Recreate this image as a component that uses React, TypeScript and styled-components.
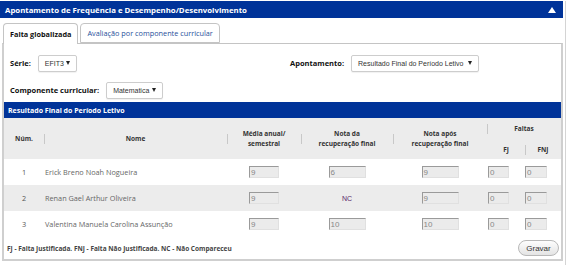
import React from "react";
import styled, { createGlobalStyle } from "styled-components";

const Global = createGlobalStyle`
  html, body { margin: 0; padding: 0; background: #fff; }
  body { font-family: "Open Sans", "DejaVu Sans", sans-serif; }
  * { box-sizing: border-box; }
`;

const Page = styled.div`
  width: 566px;
  height: 265px;
  border-right: 1px solid #d4d4d4;
`;

const Header = styled.div`
  width: 563px;
  height: 17px;
  margin-top: 1px;
  background: #003399;
  color: #fff;
  font-weight: 700;
  font-size: 7.8px;
  display: flex;
  align-items: center;
  justify-content: space-between;
  padding: 0 7px 0 5px;
`;

const Arrow = styled.span`
  width: 0;
  height: 0;
  border-left: 4px solid transparent;
  border-right: 4px solid transparent;
  border-bottom: 6px solid #fff;
`;

const Tabs = styled.div`
  display: flex;
  gap: 2px;
  padding-left: 3px;
  margin-top: 5px;
  position: relative;
  z-index: 1;
`;

const Tab = styled.div<{ $active?: boolean }>`
  height: ${(p) => (p.$active ? 21 : 20)}px;
  padding: 0 6px;
  display: flex;
  align-items: center;
  font-size: 7.3px;
  font-weight: ${(p) => (p.$active ? 700 : 400)};
  color: ${(p) => (p.$active ? "#111" : "#1f4f9a")};
  border: 1px solid #c4c4c4;
  border-bottom: ${(p) => (p.$active ? "none" : "1px solid #c4c4c4")};
  border-radius: 4px 4px 0 0;
  background: #fff;
  white-space: nowrap;
`;

const Box = styled.div`
  width: 561px;
  margin-left: 2px;
  margin-top: -1px;
  height: 218px;
  border: 2px solid #cfcfcf;
  border-top: 1px solid #c4c4c4;
  display: flex;
  flex-direction: column;
`;

const FormRow = styled.div<{ $mt: number }>`
  display: flex;
  align-items: center;
  height: 16px;
  padding-left: 6px;
  margin-top: ${(p) => p.$mt}px;
`;

const Field = styled.div<{ $w?: number }>`
  display: flex;
  align-items: center;
  gap: 7px;
  width: ${(p) => (p.$w ? `${p.$w}px` : "auto")};
`;

const Label = styled.span`
  font-size: 7.5px;
  font-weight: 700;
  color: #111;
  white-space: nowrap;
`;

const Select = styled.div<{ $w: number }>`
  width: ${(p) => p.$w}px;
  height: 17px;
  border: 1px solid #cdcdcd;
  border-radius: 2px;
  background: #fff;
  font-family: "Liberation Sans", Arial, sans-serif;
  font-size: 7px;
  color: #333;
  display: flex;
  align-items: center;
  justify-content: space-between;
  padding: 0 6px 0 6px;
  white-space: nowrap;
  box-shadow: 0 1px 1px rgba(0,0,0,0.06);
`;

const Caret = styled.span`
  width: 0;
  height: 0;
  flex: none;
  border-left: 2.5px solid transparent;
  border-right: 2.5px solid transparent;
  border-top: 4px solid #222;
`;

const SubHeader = styled.div`
  margin-top: 4px;
  height: 16px;
  background: #003399;
  color: #fff;
  font-weight: 700;
  font-size: 7px;
  display: flex;
  align-items: center;
  padding-left: 4px;
`;

const Table = styled.table`
  width: 100%;
  border-collapse: collapse;
  table-layout: fixed;
`;

const Th = styled.th<{ $sep?: boolean }>`
  font-size: 6.5px;
  font-weight: 700;
  color: #333;
  background: #ececec;
  text-align: center;
  vertical-align: middle;
  padding: 0;
  line-height: 10px;
  position: relative;
  &::before {
    content: "";
    display: ${(p) => (p.$sep ? "block" : "none")};
    position: absolute;
    left: 0;
    top: 50%;
    margin-top: -5px;
    width: 1px;
    height: 10px;
    background: #c8c8c8;
  }
`;

const HeadTop = styled.tr`
  height: 22px;
`;
const HeadBottom = styled.tr`
  height: 19px;
`;

const Row = styled.tr<{ $alt?: boolean }>`
  height: 26px;
  background: ${(p) => (p.$alt ? "#ececec" : "#fff")};
`;

const Td = styled.td<{ $align?: string; $pl?: number }>`
  font-size: 7.3px;
  color: #666;
  text-align: ${(p) => p.$align || "center"};
  padding: 0 0 0 ${(p) => p.$pl || 0}px;
  vertical-align: middle;
  white-space: nowrap;
`;

const NumTd = styled(Td)`
  color: #555;
`;

const Input = styled.div<{ $w: number }>`
  display: inline-flex;
  align-items: center;
  width: ${(p) => p.$w}px;
  height: 12px;
  background: #ebebeb;
  border-top: 1px solid #9a9a9a;
  border-left: 1px solid #9a9a9a;
  border-right: 1px solid #e0e0e0;
  border-bottom: 1px solid #e0e0e0;
  font-family: "Liberation Sans", Arial, sans-serif;
  font-size: 8px;
  color: #888;
  padding-left: 1px;
  vertical-align: middle;
`;

const NC = styled.span`
  font-family: "Liberation Sans", Arial, sans-serif;
  font-size: 7px;
  color: #5a2a6a;
`;

const Footer = styled.div`
  display: flex;
  align-items: center;
  justify-content: space-between;
  padding: 0 2px 0 3px;
  margin-top: 3px;
`;

const Legend = styled.span`
  font-size: 6.5px;
  font-weight: 700;
  color: #444;
`;

const Button = styled.button`
  width: 41px;
  height: 16px;
  border-radius: 8px;
  border: 1px solid #b8b8b8;
  background: linear-gradient(#fdfdfd, #e4e4e4);
  font-family: "Liberation Sans", Arial, sans-serif;
  font-size: 8px;
  color: #333;
  padding: 0;
`;

type Student = {
  n: number;
  name: string;
  media: string;
  rec: string | null;
  apos: string;
  fj: string;
  fnj: string;
};

const students: Student[] = [
  { n: 1, name: "Erick Breno Noah Nogueira", media: "9", rec: "6", apos: "9", fj: "0", fnj: "0" },
  { n: 2, name: "Renan Gael Arthur Oliveira", media: "9", rec: null, apos: "9", fj: "0", fnj: "0" },
  { n: 3, name: "Valentina Manuela Carolina Assunção", media: "9", rec: "10", apos: "10", fj: "0", fnj: "0" },
];

export default function App() {
  return (
    <Page>
      <Global />
      <Header>
        <span>Apontamento de Frequência e Desempenho/Desenvolvimento</span>
        <Arrow />
      </Header>
      <Tabs>
        <Tab $active>Falta globalizada</Tab>
        <Tab>Avaliação por componente curricular</Tab>
      </Tabs>
      <Box>
        <FormRow $mt={11}>
          <Field $w={280}>
            <Label>Série:</Label>
            <Select $w={39}>
              <span>EFIT3</span>
              <Caret />
            </Select>
          </Field>
          <Field>
            <Label>Apontamento:</Label>
            <Select $w={128}>
              <span>Resultado Final do Período Letivo</span>
              <Caret />
            </Select>
          </Field>
        </FormRow>
        <FormRow $mt={11}>
          <Field>
            <Label>Componente curricular:</Label>
            <Select $w={57}>
              <span>Matematica</span>
              <Caret />
            </Select>
          </Field>
        </FormRow>
        <SubHeader>Resultado Final do Período Letivo</SubHeader>
        <Table>
          <colgroup>
            <col style={{ width: 40 }} />
            <col style={{ width: 183 }} />
            <col style={{ width: 74 }} />
            <col style={{ width: 92 }} />
            <col style={{ width: 94 }} />
            <col style={{ width: 38 }} />
            <col />
          </colgroup>
          <thead>
            <HeadTop>
              <Th rowSpan={2}>Núm.</Th>
              <Th rowSpan={2} $sep>Nome</Th>
              <Th rowSpan={2} $sep>Média anual/<br />semestral</Th>
              <Th rowSpan={2} $sep>Nota da<br />recuperação final</Th>
              <Th rowSpan={2} $sep>Nota após<br />recuperação final</Th>
              <Th colSpan={2} $sep>Faltas</Th>
            </HeadTop>
            <HeadBottom>
              <Th>FJ</Th>
              <Th $sep>FNJ</Th>
            </HeadBottom>
          </thead>
          <tbody>
            {students.map((s, i) => (
              <Row key={s.n} $alt={i === 1}>
                <NumTd>{s.n}</NumTd>
                <Td $align="left" $pl={1}>{s.name}</Td>
                <Td><Input $w={30}>{s.media}</Input></Td>
                <Td>{s.rec === null ? <NC>NC</NC> : <Input $w={37}>{s.rec}</Input>}</Td>
                <Td><Input $w={37}>{s.apos}</Input></Td>
                <Td $align="left" $pl={1}><Input $w={21}>{s.fj}</Input></Td>
                <Td $align="left" $pl={0}><Input $w={22}>{s.fnj}</Input></Td>
              </Row>
            ))}
          </tbody>
        </Table>
        <Footer>
          <Legend>FJ - Falta Justificada. FNJ - Falta Não Justificada. NC - Não Compareceu</Legend>
          <Button>Gravar</Button>
        </Footer>
      </Box>
    </Page>
  );
}
